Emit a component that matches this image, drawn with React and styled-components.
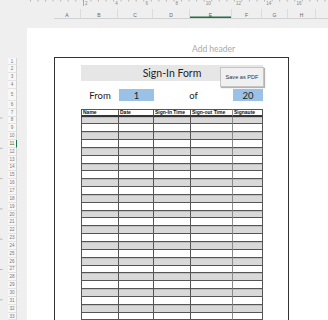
import React from 'react';
import styled, { createGlobalStyle } from 'styled-components';

const GlobalStyle = createGlobalStyle`
  *, *::before, *::after { box-sizing: border-box; }
  html, body { margin: 0; padding: 0; background: #efefef; }
  body { font-family: Lato, "Liberation Sans", sans-serif; }
`;

const SHEET_COLUMNS = [
    { letter: 'A', width: 27 },
    { letter: 'B', width: 37 },
    { letter: 'C', width: 35 },
    { letter: 'D', width: 37 },
    { letter: 'E', width: 42, active: true },
    { letter: 'F', width: 30 },
    { letter: 'G', width: 26 },
    { letter: 'H', width: 28 },
];

// widths of the cells inside the print area border
const GRID = '26px 38px 35px 37px 42px 30px 25px';
const TOP_ROWS = [7, 8, 8, 8, 12, 7.5, 8];
const DATA_ROW = 7.85;
const DATA_COUNT = 26;
const ROW_HEIGHTS = [...TOP_ROWS, ...Array(DATA_COUNT).fill(DATA_ROW)];
const ACTIVE_ROW = 11;

const headings = ['Name', 'Date', 'Sign-In Time', 'Sign-out Time', 'Signaute'];

const Frame = styled.div`
  width: 328px;
  height: 320px;
  overflow: hidden;
  background: #efefef;
  display: flex;
  flex-direction: column;
`;

const Ruler = styled.svg`
  display: block;
  flex: none;
`;

const ColumnBar = styled.div`
  display: flex;
  flex: none;
  height: 10px;
  margin-left: 54px;
  border-bottom: 1px solid #d2d2d2;
`;

const ColumnHead = styled.div`
  width: ${p => p.$w}px;
  flex: none;
  display: flex;
  align-items: center;
  justify-content: center;
  padding-top: 2px;
  font-family: "Liberation Sans", sans-serif;
  font-size: 5px;
  color: ${p => (p.$active ? '#1e6b40' : '#666')};
  border-right: 1px solid #dcdcdc;
  box-shadow: ${p => (p.$active ? 'inset 0 -1.5px 0 #217346' : 'none')};
`;

const Workspace = styled.div`
  display: flex;
  flex: 1;
  min-height: 0;
  margin-top: 9px;
`;

const Gutter = styled.div`
  width: 27px;
  flex: none;
  display: flex;
`;

const RowHeadList = styled.div`
  display: flex;
  flex-direction: column;
  width: 9px;
  margin: 30px 0 0 5px;
`;

const RowHead = styled.div`
  height: ${p => p.$h}px;
  flex: none;
  display: flex;
  align-items: center;
  justify-content: center;
  font-family: "Liberation Sans", sans-serif;
  font-size: 4.6px;
  color: ${p => (p.$active ? '#1e6b40' : '#777')};
  background: #f7f7f7;
  border-bottom: 1px solid #e3e3e3;
  border-right: ${p => (p.$active ? '1.5px solid #217346' : '1px solid #d4d4d4')};
`;

const Page = styled.div`
  flex: 1;
  min-width: 0;
  background: #fff;
  padding-left: 27px;
  display: flex;
  flex-direction: column;
`;

const HeaderZone = styled.div`
  height: 29px;
  flex: none;
  display: flex;
  align-items: flex-end;
  padding: 0 0 3px 138px;
  font-size: 8.5px;
  color: #a9a9a9;
`;

const PrintArea = styled.div`
  position: relative;
  flex: 1;
  width: 235px;
  border: 1px solid #333;
  border-bottom: none;
`;

const Line = styled.div`
  display: grid;
  grid-template-columns: ${GRID};
  height: ${p => p.$h}px;
  flex: none;
`;

const Blank = styled.div``;

const TitleBar = styled.div`
  grid-column: 2 / 7;
  background: #e7e6e6;
  display: flex;
  align-items: center;
  justify-content: center;
  font-size: 10.5px;
  color: #1f1f1f;
`;

const LabelCell = styled.div`
  grid-column: ${p => p.$span || 'auto'};
  display: flex;
  align-items: center;
  justify-content: center;
  font-size: 9.5px;
  color: #222;
  background: ${p => (p.$fill ? '#9bc2e6' : 'transparent')};
`;

const Cell = styled.div`
  position: relative;
  display: flex;
  align-items: center;
  padding-left: 1px;
  overflow: hidden;
  white-space: nowrap;
  font-family: "Liberation Sans", sans-serif;
  font-size: 5px;
  font-weight: 700;
  color: #111;
  background: ${p => (p.$shade ? '#d9d9d9' : '#fff')};
  border-right: 1px solid ${p => (p.$soft ? '#8c8c8c' : '#555')};
  border-left: ${p => (p.$first ? '1px solid #555' : 'none')};
  border-top: ${p => (p.$head ? '1px solid #555' : 'none')};
  border-bottom: ${p => (p.$head ? '2px solid #333' : '1px solid #555')};
  box-shadow: ${p => (p.$shade ? 'inset 0 1px 0 #bfbfbf' : 'none')};
`;

const Selection = styled.span`
  position: absolute;
  left: -1px;
  top: -1px;
  right: -1px;
  bottom: -1px;
  border: 1px solid #217346;
  pointer-events: none;
`;

const Handle = styled.span`
  position: absolute;
  right: -2px;
  bottom: -2px;
  width: 3px;
  height: 3px;
  background: #217346;
  border: 0.5px solid #fff;
`;

const SaveButton = styled.button`
  position: absolute;
  left: 165px;
  top: 9px;
  width: 44px;
  height: 20px;
  padding: 0;
  background: #f0f0f0;
  border: 1px solid #c4c4c4;
  box-shadow: 1px 1px 1px rgba(0, 0, 0, 0.3);
  font-family: "Liberation Sans", sans-serif;
  font-size: 5.6px;
  color: #333;
`;

const TopRuler = () => {
    const minor = [];
    for (let x = 30.5; x < 328; x += 7.55) minor.push(x);
    const major = [];
    for (let k = 0; k < 8; k++) major.push({ x: 83.5 + k * 30.2, label: 2 + k * 2 });

    return (
        <Ruler width="328" height="9" viewBox="0 0 328 9">
            {minor.map(x => (
                <line key={x} x1={x} y1="0" x2={x} y2="1.5" stroke="#a8a8a8" strokeWidth="0.8" />
            ))}
            {major.map(m => (
                <text key={m.x} x={m.x + 1.5} y="4.5" fontSize="4.5" fill="#888" fontFamily="Liberation Sans">
                    {m.label}
                </text>
            ))}
            <line x1="83.5" y1="0" x2="83.5" y2="6" stroke="#999" strokeWidth="0.8" />
        </Ruler>
    );
};

const SideRuler = () => {
    const ticks = [];
    for (let y = 90; y < 292; y += 30.3) ticks.push(y);
    return (
        <Ruler width="3" height="292" viewBox="0 0 3 292">
            {ticks.map(y => (
                <line key={y} x1="0" y1={y} x2="2.5" y2={y} stroke="#aaa" strokeWidth="0.8" />
            ))}
        </Ruler>
    );
};

const DataRow = ({ index }) => {
    const rowNumber = index + 8;
    const shade = index % 2 === 0;
    return (
        <Line $h={DATA_ROW}>
            <Blank />
            {headings.map((h, i) => (
                <Cell key={h} $shade={shade} $first={i === 0} $soft={i === 3}>
                    {rowNumber === ACTIVE_ROW && i === 3 ? (
                        <Selection>
                            <Handle />
                        </Selection>
                    ) : null}
                </Cell>
            ))}
            <Blank />
        </Line>
    );
};

const App = () => {
    return (
        <Frame>
            <GlobalStyle />
            <TopRuler />
            <ColumnBar>
                {SHEET_COLUMNS.map(c => (
                    <ColumnHead key={c.letter} $w={c.width} $active={c.active}>
                        {c.letter}
                    </ColumnHead>
                ))}
            </ColumnBar>
            <Workspace>
                <Gutter>
                    <SideRuler />
                    <RowHeadList>
                        {ROW_HEIGHTS.map((h, i) => (
                            <RowHead key={i} $h={h} $active={i + 1 === ACTIVE_ROW}>
                                {i + 1}
                            </RowHead>
                        ))}
                    </RowHeadList>
                </Gutter>
                <Page>
                    <HeaderZone>Add header</HeaderZone>
                    <PrintArea>
                        <Line $h={TOP_ROWS[0]} />
                        <Line $h={TOP_ROWS[1] + TOP_ROWS[2]}>
                            <Blank />
                            <TitleBar>Sign-In Form</TitleBar>
                        </Line>
                        <Line $h={TOP_ROWS[3]} />
                        <Line $h={TOP_ROWS[4]}>
                            <Blank />
                            <LabelCell>From</LabelCell>
                            <LabelCell $fill>1</LabelCell>
                            <LabelCell $span="4 / 6">of</LabelCell>
                            <LabelCell $fill>20</LabelCell>
                            <Blank />
                        </Line>
                        <Line $h={TOP_ROWS[5]} />
                        <Line $h={TOP_ROWS[6]}>
                            <Blank />
                            {headings.map((h, i) => (
                                <Cell key={h} $head $first={i === 0} $soft={i === 3}>
                                    {h}
                                </Cell>
                            ))}
                            <Blank />
                        </Line>
                        {Array.from({ length: DATA_COUNT }, (_, i) => (
                            <DataRow key={i} index={i} />
                        ))}
                        <SaveButton type="button">Save as PDF</SaveButton>
                    </PrintArea>
                </Page>
            </Workspace>
        </Frame>
    );
};

export default App;
